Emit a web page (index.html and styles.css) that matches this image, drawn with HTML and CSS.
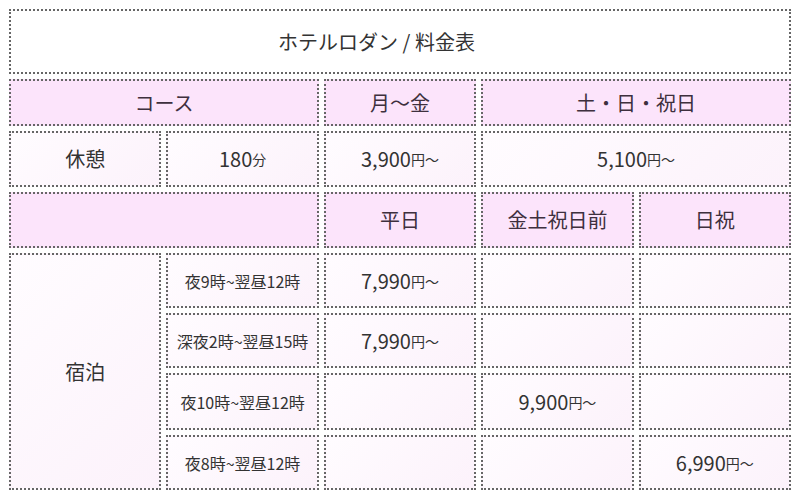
FILE: index.html
```html
<!DOCTYPE html>
<html lang="ja">
<head>
<meta charset="utf-8">
<title>ホテルロダン / 料金表</title>
<link rel="stylesheet" href="styles.css">
</head>
<body>
<div class="price">
  <div class="cell title span5">ホテルロダン / 料金表</div>

  <div class="cell head span2">コース</div>
  <div class="cell head">月〜金</div>
  <div class="cell head span2">土・日・祝日</div>

  <div class="cell body">休憩</div>
  <div class="cell body">180<small>分</small></div>
  <div class="cell body">3,900<small>円～</small></div>
  <div class="cell body span2">5,100<small>円～</small></div>

  <div class="cell head span2"></div>
  <div class="cell head">平日</div>
  <div class="cell head">金土祝日前</div>
  <div class="cell head">日祝</div>

  <div class="cell body stay">宿泊</div>
  <div class="cell body time">夜9時~翌昼12時</div>
  <div class="cell body">7,990<small>円～</small></div>
  <div class="cell body"></div>
  <div class="cell body"></div>

  <div class="cell body time">深夜2時~翌昼15時</div>
  <div class="cell body">7,990<small>円～</small></div>
  <div class="cell body"></div>
  <div class="cell body"></div>

  <div class="cell body time">夜10時~翌昼12時</div>
  <div class="cell body"></div>
  <div class="cell body">9,900<small>円～</small></div>
  <div class="cell body"></div>

  <div class="cell body time">夜8時~翌昼12時</div>
  <div class="cell body"></div>
  <div class="cell body"></div>
  <div class="cell body">6,990<small>円～</small></div>
</div>
</body>
</html>
```

FILE: styles.css
```css
* { box-sizing: border-box; }
html, body { margin: 0; padding: 0; background: #ffffff; }
body {
  padding: 9px;
  font-family: "Noto Sans CJK JP", "Noto Sans", sans-serif;
  color: #333333;
}
.price {
  display: grid;
  width: 782px;
  grid-template-columns: repeat(5, 1fr);
  grid-template-rows: 65px 47px 56px 56px 55px 55px 57px 55px;
  gap: 5px;
}
.cell {
  border: 2px dotted #666666;
  display: flex;
  align-items: center;
  justify-content: center;
  font-size: 20px;
  font-weight: 400;
  letter-spacing: 0;
  line-height: 1;
  white-space: nowrap;
}
.cell small {
  font-size: 14px;
}
.span5 { grid-column: span 5; }
.span2 { grid-column: span 2; }
.title { background: #ffffff; padding-right: 47px; }
.head { background: #fce4fb; color: #3e303e; }
.body { background: linear-gradient(135deg, #fffcff 0%, #fcf2fb 100%); }
.stay { grid-row: span 4; }
.time { font-size: 16px; }
```
